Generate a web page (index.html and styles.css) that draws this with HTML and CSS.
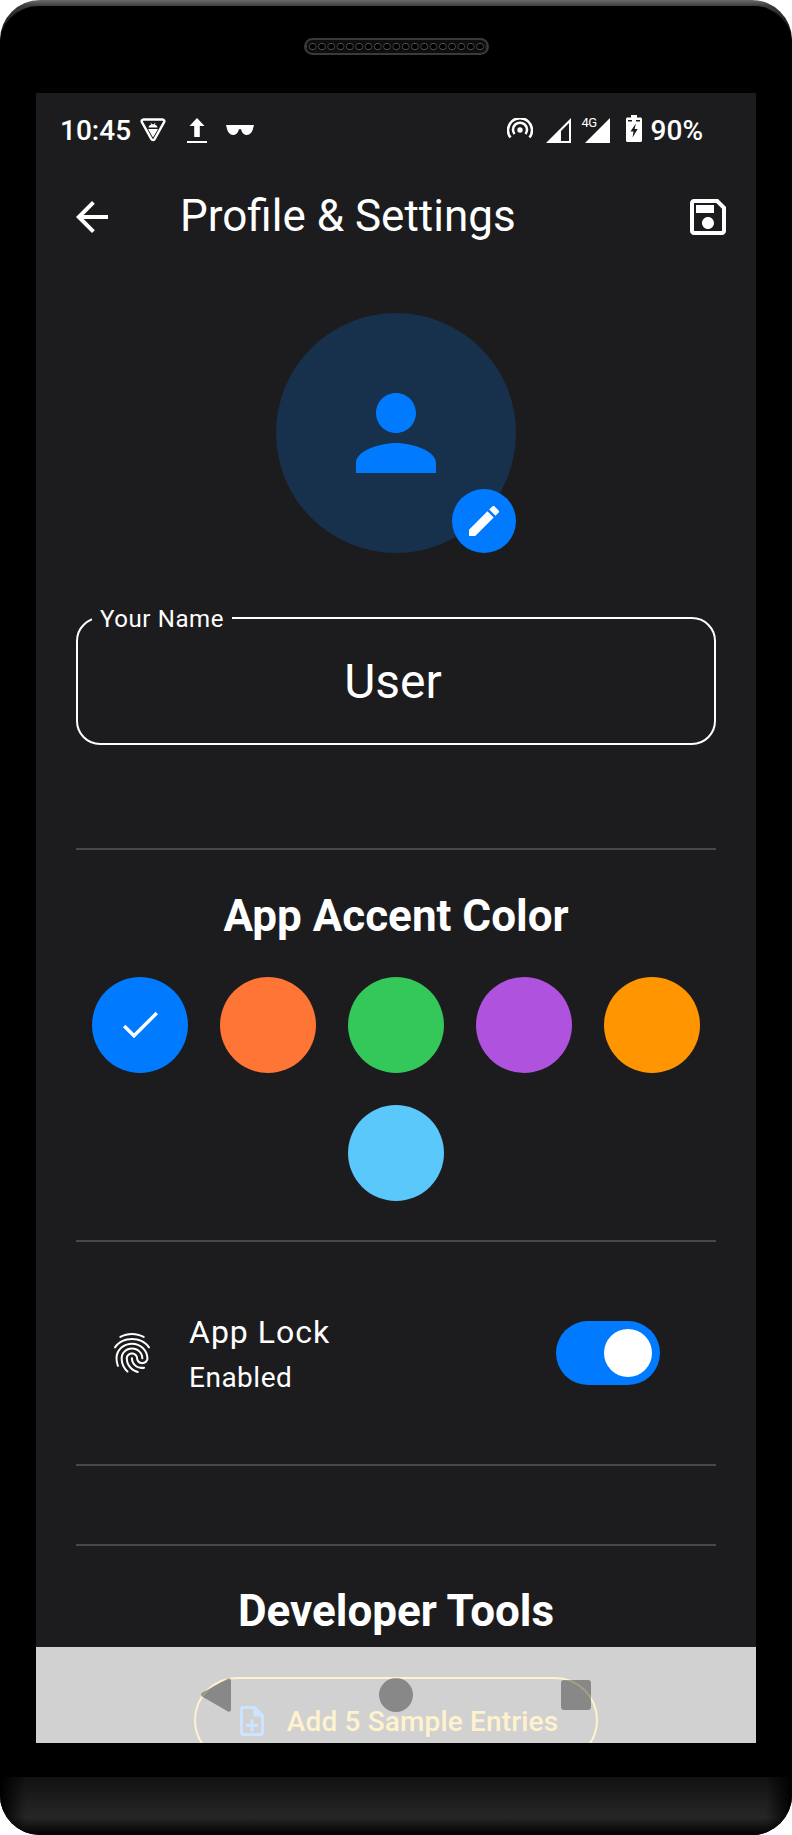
FILE: index.html
```html
<!DOCTYPE html>
<html lang="en">
<head>
  <meta charset="UTF-8">
  <meta name="viewport" content="width=device-width, initial-scale=1.0">
  <title>Profile &amp; Settings</title>
  <link rel="stylesheet" href="styles.css">
</head>
<body>
  <div class="phone">
    <div class="bezel-top">
      <div class="speaker"></div>
    </div>

    <div class="screen">
      <div class="status-bar">
        <span class="status-text">10:45</span>
        <svg class="st-shield" width="26" height="24" viewBox="0 0 26 24"><path d="M3.500 1.500h19c1.500 0 2.300 1.500 1.600 2.700l-9.500 17c-.7 1.200-2.500 1.200-3.200 0l-9.500-17C1.200 3 2 1.500 3.500 1.500z" fill="none" stroke="#fff" stroke-width="2.400"/><path d="M8.500 9.500c.3-1.600 1.500-2.700 2.800-3.100L10.500 5l.6-.3.8 1.500h2.200l.8-1.500.6.3-.8 1.400c1.300.4 2.500 1.500 2.800 3.100zM8 11h10l-5 8.500z" fill="#fff"/></svg>
        <svg class="st-upload" width="20" height="26" viewBox="0 0 20 26"><path d="M10 1l7.500 8H12.800v11H7.200V9H2.500zM0 24h20v2H0z" fill="#fff"/></svg>
        <svg class="st-glasses" width="28" height="10" viewBox="0 0 28 10"><path d="M0 0h28l-.8 3C26.500 7 24 10 20.800 10 18 10 15.600 7.500 15.200 4.200h-2.400C12.400 7.500 10 10 7.200 10 4 10 1.500 7 .8 3z" fill="#fff"/></svg>
        <span class="status-gap"></span>
        <svg class="st-hotspot" width="26" height="21" viewBox="0 0 26 21"><circle cx="13" cy="12" r="2.700" fill="#fff"/><path d="M7.500 16a7 7 0 1 1 11 0M3.500 19.500a12 12 0 1 1 19 0" fill="none" stroke="#fff" stroke-width="2.500"/></svg>
        <svg class="st-signal" width="25" height="25" viewBox="0 0 25 25"><path d="M25 0v25H0zM23 5l-8 8v10h8z" fill="#fff" fill-rule="evenodd"/></svg>
        <span class="net-label">4G</span>
        <svg class="st-signal-full" width="25" height="25" viewBox="0 0 25 25"><path d="M25 0v25H0z" fill="#fff"/></svg>
        <svg class="st-battery" width="16" height="27" viewBox="0 0 16 27"><path d="M5 0h6v2.500h3.500c.8 0 1.500.7 1.500 1.500v21.500c0 .8-.7 1.500-1.500 1.500h-13C.7 27 0 26.300 0 25.500V4c0-.8.7-1.500 1.500-1.500H5z" fill="#fff"/><path d="M2 5h4v1.500H2zM10 5h4v1.500h-4zM9.800 8.500L4.500 16.500h3l-1 6 5.200-8.500h-3z" fill="#1c1c1e"/></svg>
        <span class="status-text status-pct">90%</span>
      </div>

      <div class="app-bar">
        <svg class="bar-icon" width="48" height="48" viewBox="0 0 24 24"><path d="M20 11H7.830l5.590-5.590L12 4l-8 8 8 8 1.410-1.410L7.830 13H20v-2z" fill="#fff"/></svg>
        <h1 class="page-title">Profile &amp; Settings</h1>
        <svg class="bar-icon" width="48" height="48" viewBox="0 0 24 24"><path d="M17 3H5c-1.110 0-2 .9-2 2v14c0 1.100.89 2 2 2h14c1.100 0 2-.9 2-2V7l-4-4zm2 16H5V5h11.170L19 7.830V19zm-7-7c-1.660 0-3 1.340-3 3s1.340 3 3 3 3-1.340 3-3-1.340-3-3-3zM6 6h9v4H6z" fill="#fff"/></svg>
      </div>

      <div class="content">
        <div class="avatar">
          <svg width="120" height="120" viewBox="0 0 24 24"><path d="M12 12c2.210 0 4-1.790 4-4s-1.790-4-4-4-4 1.790-4 4 1.790 4 4 4zm0 2c-2.670 0-8 1.340-8 4v2h16v-2c0-2.660-5.330-4-8-4z" fill="#007aff"/></svg>
          <div class="avatar-edit">
            <svg width="40" height="40" viewBox="0 0 24 24"><path d="M3 17.250V21h3.750L17.810 9.940l-3.750-3.750L3 17.250zM20.710 7.040c.39-.39.39-1.020 0-1.410l-2.340-2.340c-.39-.39-1.020-.39-1.410 0l-1.830 1.830 3.750 3.750 1.830-1.830z" fill="#fff"/></svg>
          </div>
        </div>

        <div class="name-field">
          <span class="name-label">Your Name</span>
          <span class="name-value">User</span>
        </div>

        <hr class="divider divider-accent">

        <h2 class="section-title">App Accent Color</h2>
        <div class="swatches">
          <div class="swatch swatch-blue">
            <svg width="48" height="48" viewBox="0 0 24 24"><path d="M4.100 12.500L9 17.400 20.400 6" fill="none" stroke="#fff" stroke-width="1.700"/></svg>
          </div>
          <div class="swatch swatch-coral"></div>
          <div class="swatch swatch-green"></div>
          <div class="swatch swatch-purple"></div>
          <div class="swatch swatch-orange"></div>
          <div class="swatch swatch-sky"></div>
        </div>

        <hr class="divider divider-lock">

        <div class="lock-row">
          <svg class="lock-icon" width="48" height="48" viewBox="0 0 24 24"><path d="M17.810 4.470c-.08 0-.16-.02-.23-.06C15.660 3.420 14 3 12.010 3c-1.980 0-3.860.47-5.570 1.410-.24.13-.54.04-.68-.2-.13-.24-.04-.55.2-.68C7.820 2.520 9.860 2 12.010 2c2.130 0 3.990.47 6.030 1.520.25.13.34.43.21.67-.09.18-.26.28-.44.28zM3.500 9.720c-.1 0-.2-.03-.29-.09-.23-.16-.28-.47-.12-.7.99-1.400 2.250-2.500 3.750-3.270C9.980 4.040 14 4.030 17.150 5.650c1.500.77 2.760 1.860 3.750 3.250.16.22.11.54-.12.7-.23.16-.54.11-.7-.12-.9-1.260-2.040-2.250-3.390-2.940-2.870-1.470-6.540-1.470-9.400.01-1.360.7-2.500 1.700-3.400 2.960-.08.14-.23.21-.39.21zm6.250 12.070c-.13 0-.26-.05-.35-.15-.87-.87-1.340-1.430-2.010-2.640-.69-1.230-1.050-2.730-1.050-4.340 0-2.970 2.540-5.390 5.660-5.390s5.660 2.420 5.660 5.390c0 .28-.22.5-.5.5s-.5-.22-.5-.5c0-2.420-2.090-4.390-4.660-4.390-2.570 0-4.660 1.970-4.660 4.390 0 1.440.32 2.770.93 3.850.64 1.150 1.080 1.640 1.850 2.420.19.2.19.51 0 .71-.11.1-.24.15-.37.15zm7.170-1.850c-1.190 0-2.240-.3-3.100-.89-1.490-1.010-2.380-2.650-2.380-4.390 0-.28.22-.5.5-.5s.5.22.5.5c0 1.410.72 2.740 1.940 3.560.71.48 1.540.71 2.540.71.24 0 .64-.03 1.040-.1.27-.05.53.13.58.41.05.27-.13.53-.41.58-.57.11-1.070.12-1.210.12zM14.910 22c-.04 0-.09-.01-.13-.02-1.590-.44-2.630-1.030-3.720-2.100-1.400-1.390-2.170-3.240-2.170-5.220 0-1.620 1.380-2.940 3.080-2.940 1.700 0 3.080 1.320 3.080 2.940 0 1.070.93 1.940 2.080 1.940s2.080-.87 2.080-1.940c0-3.770-3.250-6.830-7.250-6.830-2.840 0-5.440 1.580-6.610 4.030-.39.81-.59 1.760-.59 2.800 0 .78.07 2.010.67 3.610.1.260-.03.55-.29.64-.26.1-.55-.04-.64-.29-.49-1.310-.73-2.610-.73-3.960 0-1.200.23-2.290.68-3.240 1.330-2.790 4.280-4.600 7.510-4.600 4.550 0 8.250 3.510 8.250 7.830 0 1.620-1.380 2.940-3.080 2.940s-3.080-1.320-3.080-2.940c0-1.070-.93-1.940-2.080-1.940s-2.080.87-2.080 1.940c0 1.710.66 3.310 1.870 4.510.95.94 1.860 1.460 3.270 1.850.27.07.42.35.35.61-.05.23-.26.38-.47.38z" fill="#fff"/></svg>
          <div class="lock-text">
            <span class="lock-title">App Lock</span>
            <span class="lock-sub">Enabled</span>
          </div>
          <div class="switch"><span class="switch-thumb"></span></div>
        </div>

        <hr class="divider divider-plain">
        <hr class="divider divider-dev">

        <h2 class="section-title section-dev">Developer Tools</h2>
        <button class="sample-btn">
          <svg width="36" height="36" viewBox="0 0 24 24"><path d="M13 11h-2v3H8v2h3v3h2v-3h3v-2h-3zm1-9H6c-1.100 0-2 .9-2 2v16c0 1.100.89 2 2 2h12c1.100 0 2-.9 2-2V8l-6-6zm4 18H6V4h7v5h5v11z" fill="#007aff"/></svg>
          <span>Add 5 Sample Entries</span>
        </button>
      </div>

      <div class="nav-bar">
        <svg width="30" height="34" viewBox="0 0 30 34"><path d="M27 .500L1.500 14.500c-1.800 1-1.800 3.300 0 4.300L27 33.500c1.300.7 3-.2 3-1.700V2.200C30 .7 28.300-.2 27 .500z"/></svg>
        <span class="nav-circle"></span>
        <span class="nav-square"></span>
      </div>
    </div>

    <div class="bezel-bottom"></div>
  </div>
</body>
</html>
```

FILE: styles.css
```css
* {
  box-sizing: border-box;
}
html, body {
  margin: 0;
  padding: 0;
  background: #fff;
}
body {
  font-family: Roboto, "Noto Sans", sans-serif;
  color: #fff;
}
.phone {
  width: 792px;
  height: 1835px;
  border-radius: 40px;
  overflow: hidden;
  background: linear-gradient(180deg, #6a6a6a 0, #3c3c3c 6px, #1c1c1c 24px, #000 44px);
  display: flex;
  flex-direction: column;
}

/* bezels */
.bezel-top {
  height: 87px;
  margin-top: 6px;
  padding-top: 32px;
  background: #000;
  border-radius: 38px 38px 0 0;
  display: flex;
  justify-content: center;
}
.speaker {
  width: 185px;
  height: 17px;
  border-radius: 9px;
  border: 2px solid #3a3a3a;
  background: #0e0e0e radial-gradient(circle at center, #000 2.5px, #555 3px, transparent 4px) 2px 0 / 9.3px 13px repeat-x;
}
.bezel-bottom {
  height: 58px;
  margin-top: 34px;
  background:
    linear-gradient(90deg, #000, transparent 26px, transparent calc(100% - 26px), #000),
    linear-gradient(180deg, #111 0, #262626 70%, #000 100%);
}

/* screen */
.screen {
  position: relative;
  width: 720px;
  height: 1650px;
  margin-left: 36px;
  overflow: hidden;
  background: #1c1c1e;
  flex: none;
}
.status-bar {
  height: 74px;
  padding: 0 53px 0 24px;
  display: flex;
  align-items: center;
}
.status-text {
  font-size: 28px;
  font-weight: 500;
}
.status-gap {
  flex: 1;
}
.st-shield {
  margin-left: 9px;
}
.st-upload {
  margin-left: 21px;
}
.st-glasses {
  margin-left: 19px;
}
.st-hotspot {
  margin-top: -3px;
}
.st-signal {
  margin-left: 13px;
}
.net-label {
  width: 14px;
  margin: 24px -11px 0 11px;
  align-self: flex-start;
  font-size: 13px;
  line-height: 12px;
  letter-spacing: -0.5px;
}
.st-battery {
  margin: -3px 0 0 16px;
}
.status-pct {
  margin-left: 9px;
}
.app-bar {
  height: 100px;
  padding: 0 24px 0 32px;
  display: flex;
  align-items: center;
}
.page-title {
  flex: 1;
  margin: -2px 0 0 64px;
  font-size: 44px;
  font-weight: 400;
}
.content {
  padding: 0 40px;
}

/* avatar */
.avatar {
  position: relative;
  width: 240px;
  height: 240px;
  margin: 46px auto 0;
  border-radius: 50%;
  background: #17304c;
  display: flex;
  align-items: center;
  justify-content: center;
}
.avatar-edit {
  position: absolute;
  right: 0;
  bottom: 0;
  width: 64px;
  height: 64px;
  border-radius: 50%;
  background: #007aff;
  display: flex;
  align-items: center;
  justify-content: center;
}

/* name field */
.name-field {
  position: relative;
  height: 128px;
  margin-top: 64px;
  padding-right: 6px;
  border: 2px solid #fff;
  border-radius: 24px;
  display: flex;
  align-items: center;
  justify-content: center;
}
.name-label {
  position: absolute;
  left: 14px;
  top: -12px;
  padding: 0 8px;
  background: #1c1c1e;
  font-size: 24px;
  line-height: 24px;
  letter-spacing: 0.6px;
}
.name-value {
  font-size: 48px;
}

/* sections */
.divider {
  height: 2px;
  margin: 0;
  border: 0;
  background: #48484a;
}
.divider-accent {
  margin-top: 103px;
}
.section-title {
  margin: 0;
  font-size: 44px;
  font-weight: 700;
  line-height: 47px;
  text-align: center;
}
.divider-accent + .section-title {
  margin-top: 43px;
}
.swatches {
  margin-top: 37px;
  display: flex;
  flex-wrap: wrap;
  justify-content: center;
  gap: 32px;
}
.swatch {
  width: 96px;
  height: 96px;
  border-radius: 50%;
  display: flex;
  align-items: center;
  justify-content: center;
}
.swatch-blue { background: #007aff; }
.swatch-coral { background: #ff7536; }
.swatch-green { background: #34c759; }
.swatch-purple { background: #af52de; }
.swatch-orange { background: #ff9500; }
.swatch-sky { background: #5ac8fa; }
.divider-lock {
  margin-top: 39px;
}

/* app lock */
.lock-row {
  height: 222px;
  padding: 0 16px 0 32px;
  display: flex;
  align-items: center;
}
.lock-icon {
  flex: none;
}
.lock-text {
  flex: 1;
  margin-left: 33px;
  display: flex;
  flex-direction: column;
  gap: 10px;
}
.lock-title {
  font-size: 32px;
  letter-spacing: 1px;
}
.lock-sub {
  font-size: 28px;
  letter-spacing: 0.5px;
}
.switch {
  width: 104px;
  height: 64px;
  margin-right: 40px;
  padding: 8px;
  border-radius: 32px;
  background: #007aff;
  display: flex;
  justify-content: flex-end;
}
.switch-thumb {
  width: 48px;
  height: 48px;
  border-radius: 50%;
  background: #fff;
}
.divider-dev {
  margin-top: 78px;
}
.section-dev {
  margin-top: 42px;
}

/* button sits under the translucent nav bar */
.sample-btn {
  width: 404px;
  height: 86px;
  margin: 42px auto 0;
  padding: 2px 0 0;
  border: 2px solid #ffc107;
  border-radius: 43px;
  background: none;
  color: #ffc107;
  font: 500 28px Roboto, sans-serif;
  letter-spacing: 0.15px;
  display: flex;
  align-items: center;
  justify-content: center;
  gap: 17px;
}
.nav-bar {
  position: absolute;
  left: 0;
  right: 0;
  bottom: 0;
  height: 96px;
  background: rgba(255, 255, 255, 0.8);
}
.nav-bar svg,
.nav-circle,
.nav-square {
  position: absolute;
  fill: rgba(0, 0, 0, 0.35);
}
.nav-bar svg {
  left: 165px;
  top: 31px;
}
.nav-circle {
  left: 343px;
  top: 31px;
  width: 34px;
  height: 34px;
  border-radius: 50%;
  background: rgba(0, 0, 0, 0.35);
}
.nav-square {
  left: 525px;
  top: 33px;
  width: 30px;
  height: 30px;
  border-radius: 3px;
  background: rgba(0, 0, 0, 0.35);
}
```
